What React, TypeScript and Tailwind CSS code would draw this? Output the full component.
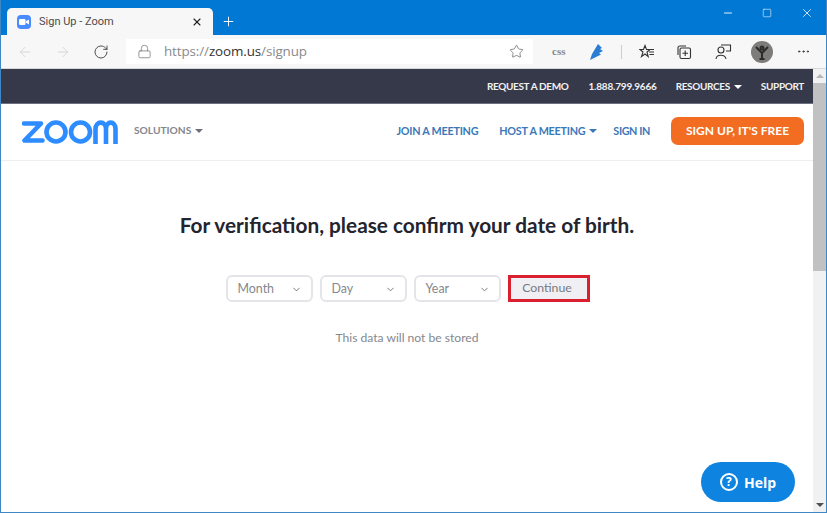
import { ArrowLeft, ArrowRight, RotateCw, Lock, Star, Plus, X, Minus, Square, ChevronDown, MoreHorizontal } from "lucide-react";

const Caret = ({ className = "" }: { className?: string }) => (
  <span className={`inline-block w-0 h-0 border-x-[4px] border-x-transparent border-t-[4px] ${className}`} />
);

const Logo = () => (
  <svg className="mt-[2px]" width="96" height="24" viewBox="0 0 96 24" fill="none" stroke="#2d8cff" strokeWidth="4.6">
    <path d="M2 3.5 H19 L2.5 20.5 H20.5" strokeLinejoin="round" strokeLinecap="round" />
    <circle cx="34" cy="12" r="9.5" />
    <circle cx="58.5" cy="12" r="9.5" />
    <path d="M73.5 24 V9 C73.5 0.5 84 0.5 84 9 V24 M84 9 C84 0.5 93.5 0.5 93.5 9 V24" />
  </svg>
);

const Select = ({ label }: { label: string }) => (
  <div className="w-[87px] h-[27px] rounded-[6px] border-2 border-[#e3e5e8] flex items-center justify-between pt-[1px] pl-[10px] pr-[9px] text-[12.4px] text-[#85878d] bg-white">
    <span>{label}</span>
    <ChevronDown size={11} strokeWidth={2} className="text-[#6f7177]" />
  </div>
);

export default function App() {
  return (
    <div className="w-[827px] h-[513px] overflow-hidden flex flex-col bg-white border-x border-b border-[#3f88c5] font-['Lato','Liberation_Sans',sans-serif]">
      {/* Title bar */}
      <div className="h-[35px] shrink-0 bg-[#0078d4] flex items-end pl-[6px]">
        <div className="w-[206px] h-[27px] bg-[#f7f7f7] rounded-t-[5px] flex items-center pl-[10px] pr-[10px]">
          <div className="w-[14px] h-[14px] rounded-[4px] bg-[#4a8cff] flex items-center justify-center">
            <svg width="10" height="6" viewBox="0 0 10 6" fill="white"><rect width="6.5" height="6" rx="1.3" /><path d="M7 2.2 L10 .4 V5.6 L7 3.8Z" /></svg>
          </div>
          <span className="ml-[8px] mt-[1px] text-[11px] text-[#4a4a4a] font-['Roboto',sans-serif]">Sign Up - Zoom</span>
          <X size={12} strokeWidth={2.2} className="ml-auto text-[#222]" />
        </div>
        <Plus size={15} strokeWidth={1.5} className="ml-[8px] mb-[6px] text-white" />
        <div className="ml-auto flex items-center self-start h-[26px] text-[#e3f0fb]">
          <Minus size={12} strokeWidth={2} className="mr-[28px]" />
          <Square size={10} strokeWidth={1.5} className="mr-[28px]" />
          <X size={14} strokeWidth={1.5} className="mr-[12px]" />
        </div>
      </div>
      {/* Toolbar */}
      <div className="h-[34px] shrink-0 bg-[#f7f7f7] border-b border-[#d8d8d8] flex items-center">
        <ArrowLeft size={16} strokeWidth={1.3} className="ml-[16px] text-[#d2d2d2]" />
        <ArrowRight size={16} strokeWidth={1.3} className="ml-[22px] text-[#d2d2d2]" />
        <RotateCw size={16} strokeWidth={1.4} className="ml-[22px] text-[#444]" />
        <div className="ml-[17px] w-[407px] h-[25px] bg-white flex items-center pl-[11px] pr-[9px]">
          <Lock size={15} strokeWidth={1.2} className="text-[#777]" />
          <span className="ml-[12px] text-[13.4px] text-[#8a8a8a] font-['Open_Sans',sans-serif] tracking-[-0.1px]">https://<span className="text-[#333]">zoom.us</span>/signup</span>
          <Star size={15} strokeWidth={1.2} className="ml-auto text-[#666]" />
        </div>
        <span className="ml-[19px] w-[14px] text-[11px] font-bold text-[#888] font-['Liberation_Serif',serif]">css</span>
        <svg className="ml-[23px]" width="15" height="18" viewBox="0 0 15 18" fill="#2b7cd3"><path d="M9 1 L13 5 L11 6 L14 8 L10 10 L12 11.5 L7 14 L1 17 L3 11 Z" /></svg>
        <div className="ml-[17px] w-px h-[14px] bg-[#ccc]" />
        <svg className="ml-[17px]" width="16" height="16" viewBox="0 0 16 16" fill="none" stroke="#333" strokeWidth="1.1"><path d="M6 1.5 L7.5 5.5 H11 L8 8 L9.2 12.5 L6 10 L2.5 12.5 L4 8 L1 5.5 H4.5Z" /><path d="M10 8H15M10.5 10.5H15M10 5.5H15" /></svg>
        <svg className="ml-[21px]" width="16" height="16" viewBox="0 0 16 16" fill="none" stroke="#333" strokeWidth="1.1"><rect x="4" y="4" width="10.5" height="10.5" rx="1.5" /><path d="M2 11 V4 Q2 2 4 2 H10 M9.2 6.5 V12 M6.5 9.2 H12" /></svg>
        <svg className="ml-[23px]" width="17" height="17" viewBox="0 0 17 17" fill="none" stroke="#333" strokeWidth="1.1"><circle cx="6" cy="7" r="3" /><path d="M1 16 C1.5 11 10 11 11 16" /><path d="M6 2 H15.5 V8 H11" /></svg>
        <div className="ml-[19px] w-[22px] h-[22px] rounded-full bg-[#7d7c7a] flex items-center justify-center">
          <svg width="14" height="16" viewBox="0 0 14 16" fill="none" stroke="#2b2b2b" strokeWidth="2"><circle cx="7" cy="4" r="1.5" /><path d="M1 3 L7 9 L13 3 M7 8 V15 M4.5 15 H9.5" /></svg>
        </div>
        <MoreHorizontal size={15} strokeWidth={1.6} className="ml-[23px] text-[#333]" />
      </div>
      {/* Page + scrollbar */}
      <div className="flex-1 min-h-0 flex relative">
        <div className="flex-1 min-w-0 flex flex-col">
          <div className="h-[35px] shrink-0 bg-[#363949] border-b border-[#6d7080] flex items-center justify-end pt-[1px] pr-[9px] text-[10px] font-bold text-[#f1f1f3] tracking-[-0.35px]">
            <span>REQUEST A DEMO</span>
            <span className="ml-[20px] tracking-[-0.2px]">1.888.799.9666</span>
            <span className="ml-[19px]">RESOURCES</span>
            <Caret className="ml-[4px] border-t-white" />
            <span className="ml-[19px]">SUPPORT</span>
          </div>
          <div className="h-[57px] shrink-0 border-b border-[#eceef0] flex items-center pl-[21px] pr-[9px] pb-[2px]">
            <Logo />
            <span className="ml-[16px] text-[10.2px] font-bold text-[#85878e]">SOLUTIONS</span>
            <Caret className="ml-[4px] border-t-[#6e7078]" />
            <div className="ml-auto flex items-center text-[10.8px] font-bold text-[#3b78b8] tracking-[-0.25px]">
              <span>JOIN A MEETING</span>
              <span className="ml-[21px]">HOST A MEETING</span>
              <Caret className="ml-[4px] border-t-[#3b78b8]" />
              <span className="ml-[16px] tracking-[-0.4px]">SIGN IN</span>
              <div className="ml-[21px] w-[133px] h-[28px] rounded-[7px] bg-[#f26d21] text-white text-[12px] font-bold flex items-center justify-center tracking-normal">SIGN UP, IT'S FREE</div>
            </div>
          </div>
          <div className="flex-1 flex flex-col items-center pt-[51px]">
            <h1 className="text-[20.8px] leading-[26px] font-bold text-[#23242d]">For verification, please confirm your date of birth.</h1>
            <div className="ml-[1px] mt-[37px] flex items-center gap-[7px]">
              <Select label="Month" />
              <Select label="Day" />
              <Select label="Year" />
              <div className="w-[82px] h-[27px] border-[3px] border-[#d9202e] bg-[#efeff4] flex items-center justify-center pr-[3px] text-[12.3px] text-[#77797f]">Continue</div>
            </div>
            <p className="mt-[27px] text-[12.1px] text-[#85878d]">This data will not be stored</p>
          </div>
        </div>
        <div className="w-[13px] shrink-0 bg-[#f1f1f1] flex flex-col items-center">
          <div className="h-[14px] shrink-0 flex items-center justify-center">
            <span className="inline-block w-0 h-0 border-x-[4px] border-x-transparent border-b-[4px] border-b-[#b5b5b5]" />
          </div>
          <div className="h-[188px] w-full bg-[#c1c1c1]" />
          <div className="mt-auto h-[14px] shrink-0 flex items-center justify-center">
            <Caret className="border-t-[#505050]" />
          </div>
        </div>
        <div className="absolute right-[31px] bottom-[10px] w-[94px] h-[40px] rounded-full bg-[#0e84e0] text-white flex items-center justify-center font-['Open_Sans',sans-serif] font-bold text-[14px]">
          <span className="w-[18px] h-[18px] rounded-full border-2 border-white flex items-center justify-center text-[12px] mr-[6px]">?</span>
          Help
        </div>
      </div>
    </div>
  );
}
